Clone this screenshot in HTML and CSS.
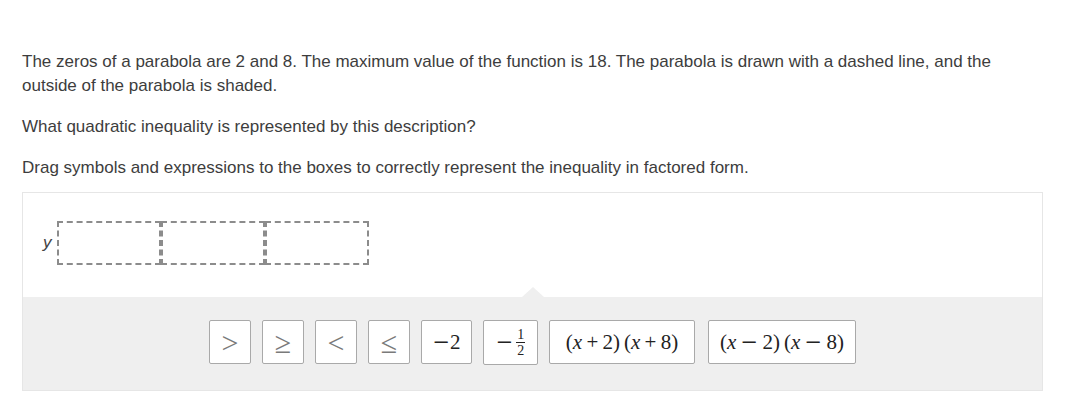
FILE: index.html
```html
<!DOCTYPE html>
<html>
<head>
<meta charset="utf-8">
<link rel="stylesheet" href="styles.css">
</head>
<body>
<div class="page">
  <p class="para">The zeros of a parabola are 2 and 8. The maximum value of the function is 18. The parabola is drawn with a dashed line, and the outside of the parabola is shaded.</p>
  <p class="para">What quadratic inequality is represented by this description?</p>
  <p class="para">Drag symbols and expressions to the boxes to correctly represent the inequality in factored form.</p>
  <div class="widget">
    <div class="answer">
      <span class="var">y</span>
      <div class="slots">
        <div class="slot"></div>
        <div class="slot"></div>
        <div class="slot"></div>
      </div>
    </div>
    <div class="tray">
      <div class="notch"></div>
      <div class="tile t-sym"><span class="rel">&gt;</span></div>
      <div class="tile t-sym"><span class="rel">≥</span></div>
      <div class="tile t-sym"><span class="rel">&lt;</span></div>
      <div class="tile t-sym"><span class="rel">≤</span></div>
      <div class="tile t-num"><span class="math"><span class="op">−</span>2</span></div>
      <div class="tile t-frac"><span class="math"><span class="op">−</span></span><span class="frac"><span class="num">1</span><span class="den">2</span></span></div>
      <div class="tile t-expr"><span class="math">(<i>x</i><span class="bin">+</span>2)<span class="sp"></span>(<i>x</i><span class="bin">+</span>8)</span></div>
      <div class="tile t-expr2"><span class="math">(<i>x</i><span class="bin op">−</span>2)<span class="sp"></span>(<i>x</i><span class="bin op">−</span>8)</span></div>
    </div>
  </div>
</div>
</body>
</html>
```
FILE: styles.css
```css
html, body {
  margin: 0;
  padding: 0;
  background: #ffffff;
}
.page {
  padding: 50px 0 0 22px;
  width: 1022px;
  font-family: "Liberation Sans", Arial, sans-serif;
  color: #3d3d3d;
}
.para {
  margin: 0 0 17px 0;
  font-size: 17px;
  line-height: 24px;
  width: 1000px;
}
.para:last-of-type {
  margin-bottom: 12px;
}
.widget {
  border: 1px solid #e6e6e6;
  width: 1019px;
}
.answer {
  display: flex;
  align-items: center;
  padding: 28px 0 32px 20px;
  background: #fff;
}
.var {
  font-family: "Liberation Sans", Arial, sans-serif;
  font-style: italic;
  font-size: 17px;
  color: #444;
  width: 14px;
}
.slots {
  display: flex;
}
.slot {
  width: 100px;
  height: 40px;
  border: 2px dashed #8c8c8c;
}
.tray {
  position: relative;
  background: #efefef;
  display: flex;
  justify-content: center;
  gap: 11px;
  padding: 23px 0 25px 0;
}
.notch {
  position: absolute;
  left: 499px;
  top: -10px;
  width: 0;
  height: 0;
  border-left: 11px solid transparent;
  border-right: 11px solid transparent;
  border-bottom: 10px solid #efefef;
}
.tile {
  box-sizing: border-box;
  height: 44px;
  background: #fff;
  border: 1px solid #a9a9a9;
  border-radius: 2px;
  display: flex;
  align-items: center;
  justify-content: center;
  font-family: "Liberation Serif", "Times New Roman", serif;
  color: #222;
}
.t-sym { width: 42px; }
.t-num { width: 51px; }
.t-frac { width: 55px; height: 45px; }
.t-expr { width: 146px; }
.t-expr2 { width: 148px; margin-left: 2px; }
.rel {
  font-family: "Liberation Serif", serif;
  font-size: 30px;
  color: #7a7a7a;
  line-height: 1;
  position: relative;
  top: 1px;
}
.math {
  font-size: 21px;
  white-space: nowrap;
}
.math i {
  font-style: italic;
}
.op {
  font-family: "DejaVu Serif", serif;
  font-size: 21px;
}
.bin {
  margin: 0 0.2em;
}
.sp {
  display: inline-block;
  width: 0.2em;
}
.frac {
  display: inline-flex;
  flex-direction: column;
  align-items: center;
  margin-left: 3px;
  font-size: 14px;
  line-height: 13px;
}
.num {
  border-bottom: 1px solid #222;
  padding: 0 1px 1px;
}
.den {
  padding-top: 1px;
}
```
